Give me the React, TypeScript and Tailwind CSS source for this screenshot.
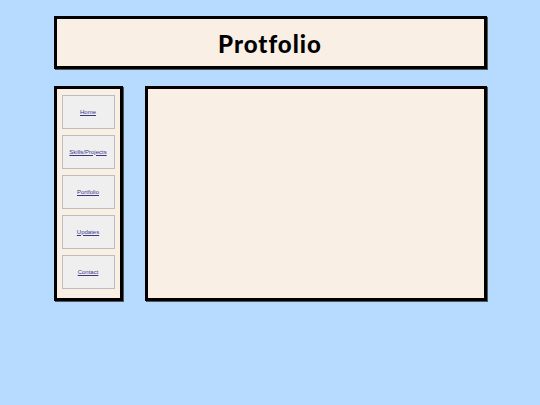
export default function App() {
  const links = ["Home", "Skills/Projects", "Portfolio", "Updates", "Contact"];

  return (
    <div className="min-h-[405px] w-full bg-[#b7dbff] pt-[16px] font-['Liberation_Sans',Arial,sans-serif]">
      <div className="mx-auto flex w-[433px] flex-col gap-[17px]">
        {/* Header */}
        <header className="flex h-[53px] items-center justify-center border-[3px] border-black bg-[#f9efe4] pt-[3px] shadow-[1px_1px_0_#555]">
          <h1 className="font-['Lato',sans-serif] text-[24px] font-black tracking-[1px] text-black">
            Protfolio
          </h1>
        </header>

        <div className="flex gap-[22px]">
          {/* Sidebar */}
          <nav className="flex h-[215px] w-[69px] flex-col gap-[6px] border-[3px] border-black bg-[#f9efe4] px-[5px] pt-[6px] shadow-[1px_1px_0_#555]">
            {links.map((l) => (
              <a
                key={l}
                href="#"
                className="flex h-[34px] w-[53px] items-center justify-center border border-[#bdbdbd] bg-[#efefef] text-[6px] text-[#3b3585] underline decoration-[0.5px]"
              >
                {l}
              </a>
            ))}
          </nav>

          {/* Main */}
          <main className="h-[215px] flex-1 border-[3px] border-black bg-[#f9efe4] shadow-[1px_1px_0_#555]" />
        </div>
      </div>
    </div>
  );
}
